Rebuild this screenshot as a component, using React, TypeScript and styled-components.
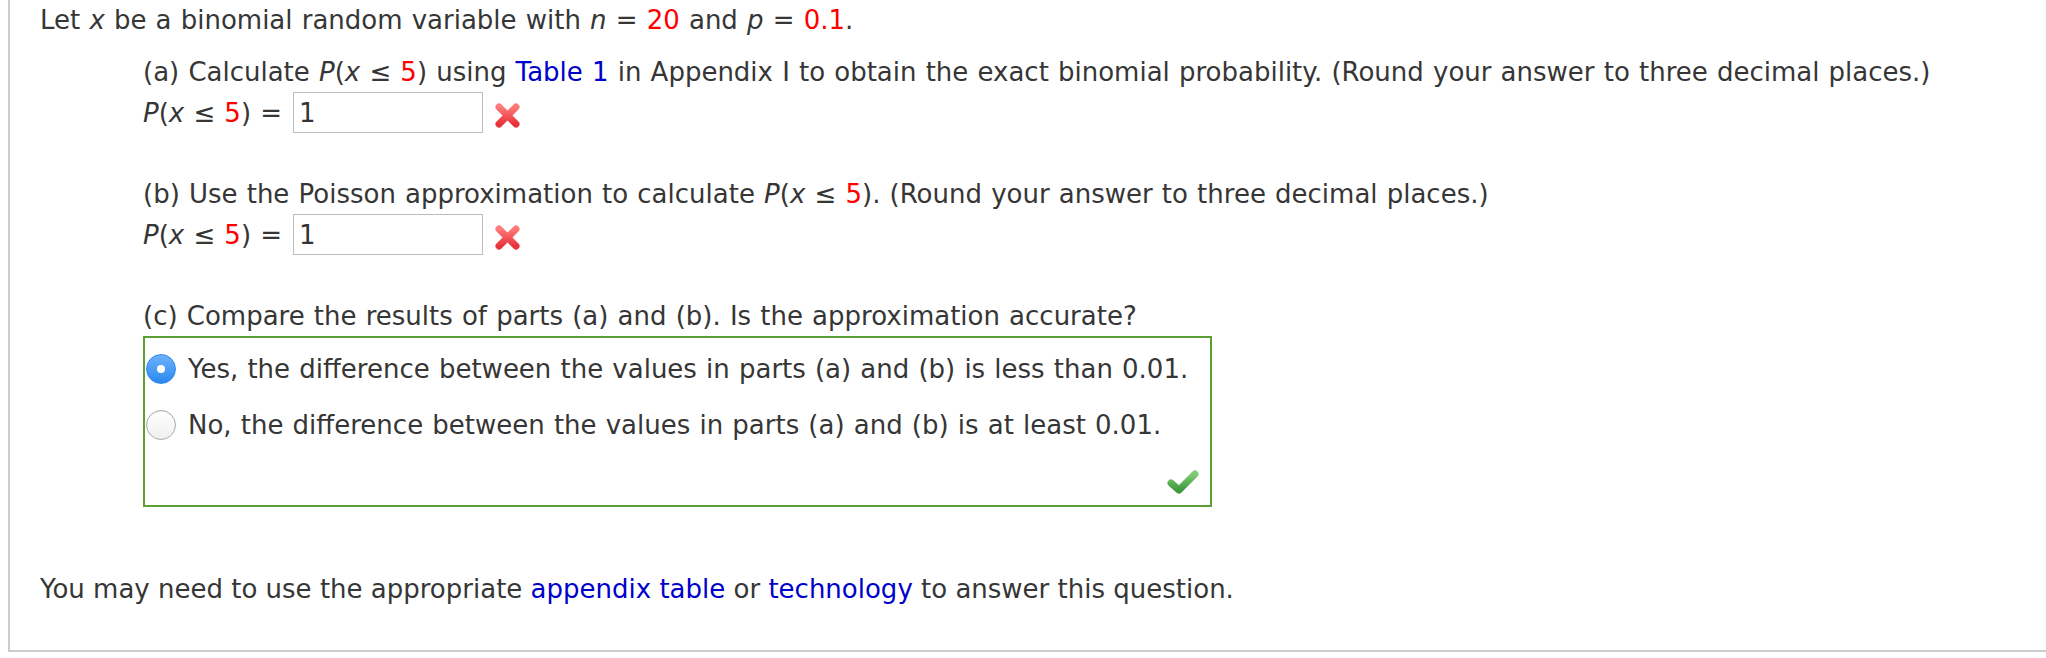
import React from 'react'
import styled, { createGlobalStyle } from 'styled-components'

const GlobalStyle = createGlobalStyle`
    html, body {
        margin: 0;
        padding: 0;
        background: #ffffff;
    }
    body {
        font-family: "DejaVu Sans", Verdana, sans-serif;
        font-size: 26px;
        word-spacing: 0.9px;
        color: #363636;
    }
`

const Panel = styled.div`
    margin-left: 8px;
    height: 650px;
    box-sizing: content-box;
    border-left: 2px solid #cccccc;
    border-bottom: 2px solid #cccccc;
    padding-left: 30px;
`

const Line = styled.div<{ $gap?: number }>`
    line-height: 40px;
    white-space: nowrap;
    margin-bottom: ${(p) => p.$gap ?? 0}px;
`

const Part = styled.div`
    margin-left: 103px;

    & + & {
        margin-top: 41px;
    }
`

const AnswerRow = styled.div`
    display: flex;
    align-items: center;
    height: 41px;
    line-height: 40px;
    white-space: nowrap;
`

const AnswerInput = styled.input`
    box-sizing: border-box;
    width: 190px;
    height: 41px;
    margin-left: 11px;
    padding: 0 5px;
    border: 1px solid #bdbdbd;
    font-family: inherit;
    font-size: 26px;
    color: #333333;
    background: #ffffff;
    outline: none;
`

const Mark = styled.span`
    display: inline-flex;
    margin-left: 11px;
    margin-top: 6px;
`

const Var = styled.i`
    font-style: italic;
`

const Red = styled.span`
    color: #ff0000;
`

const Link = styled.a`
    color: #0000cc;
    text-decoration: none;
    cursor: pointer;
`

const ChoiceBox = styled.div`
    width: 1069px;
    box-sizing: border-box;
    border: 2px solid #5c9f35;
    padding-top: 3px;
`

const Choice = styled.label`
    display: flex;
    align-items: center;
    height: 56px;
    line-height: 56px;
    white-space: nowrap;
    cursor: pointer;
`

const Radio = styled.span<{ $checked?: boolean }>`
    position: relative;
    flex: none;
    width: 30px;
    height: 30px;
    margin-left: 1px;
    margin-right: 12px;
    border-radius: 50%;
    box-sizing: border-box;
    border: 1px solid ${(p) => (p.$checked ? '#2f86ec' : '#a9a9a9')};
    background: ${(p) =>
        p.$checked
            ? 'linear-gradient(#6cb3fa, #2b88f0)'
            : 'linear-gradient(#ffffff, #f0f0f0)'};
    box-shadow: ${(p) => (p.$checked ? 'none' : 'inset 0 1px 1px rgba(0,0,0,0.05)')};

    &:after {
        content: "";
        display: ${(p) => (p.$checked ? 'block' : 'none')};
        position: absolute;
        left: 50%;
        top: 50%;
        width: 8px;
        height: 8px;
        margin: -4px 0 0 -4px;
        border-radius: 50%;
        background: #ffffff;
    }
`

const ChoiceFooter = styled.div`
    display: flex;
    justify-content: flex-end;
    align-items: flex-end;
    box-sizing: border-box;
    height: 52px;
    padding: 0 11px 10px 0;
`

const Note = styled.div`
    margin-top: 62px;
    line-height: 40px;
    white-space: nowrap;
    word-spacing: normal;
`

const WrongIcon = () => (
    <svg width="27" height="27" viewBox="0 0 27 27">
        <defs>
            <linearGradient id="xg" x1="0" y1="0" x2="0" y2="1">
                <stop offset="0" stopColor="#ff7a7a" />
                <stop offset="1" stopColor="#e8333a" />
            </linearGradient>
        </defs>
        <path d="M5 5 L22 22 M22 5 L5 22" stroke="url(#xg)" strokeWidth="7" strokeLinecap="round" fill="none" />
    </svg>
)

const RightIcon = () => (
    <svg width="32" height="27" viewBox="0 0 32 27">
        <defs>
            <linearGradient id="cg" x1="0" y1="0" x2="0" y2="1">
                <stop offset="0" stopColor="#7fcc74" />
                <stop offset="1" stopColor="#3f9a3c" />
            </linearGradient>
        </defs>
        <path d="M4 15 L12 22 L28 6" stroke="url(#cg)" strokeWidth="7" strokeLinecap="round" strokeLinejoin="round" fill="none" />
    </svg>
)

const Prob = () => (
    <>
        <Var>P</Var>(<Var>x</Var> ≤ <Red>5</Red>)
    </>
)

const Answer: React.FC<{ value: string }> = ({ value }) => (
    <AnswerRow>
        <span>
            <Prob /> =
        </span>
        <AnswerInput value={value} readOnly />
        <Mark>
            <WrongIcon />
        </Mark>
    </AnswerRow>
)

const App: React.FC = () => {
    return (
        <>
            <GlobalStyle />
            <Panel>
                <Line $gap={12}>
                    Let <Var>x</Var> be a binomial random variable with <Var>n</Var> = <Red>20</Red> and{' '}
                    <Var>p</Var> = <Red>0.1</Red>.
                </Line>

                <Part>
                    <Line>
                        (a) Calculate <Prob /> using <Link>Table 1</Link> in Appendix I to obtain the exact
                        binomial probability. (Round your answer to three decimal places.)
                    </Line>
                    <Answer value="1" />
                </Part>

                <Part>
                    <Line>
                        (b) Use the Poisson approximation to calculate <Prob />. (Round your answer to three
                        decimal places.)
                    </Line>
                    <Answer value="1" />
                </Part>

                <Part>
                    <Line>(c) Compare the results of parts (a) and (b). Is the approximation accurate?</Line>
                    <ChoiceBox>
                        <Choice>
                            <Radio $checked />
                            Yes, the difference between the values in parts (a) and (b) is less than 0.01.
                        </Choice>
                        <Choice>
                            <Radio />
                            No, the difference between the values in parts (a) and (b) is at least 0.01.
                        </Choice>
                        <ChoiceFooter>
                            <RightIcon />
                        </ChoiceFooter>
                    </ChoiceBox>
                </Part>

                <Note>
                    You may need to use the appropriate <Link>appendix table</Link> or{' '}
                    <Link>technology</Link> to answer this question.
                </Note>
            </Panel>
        </>
    )
}

export default App
